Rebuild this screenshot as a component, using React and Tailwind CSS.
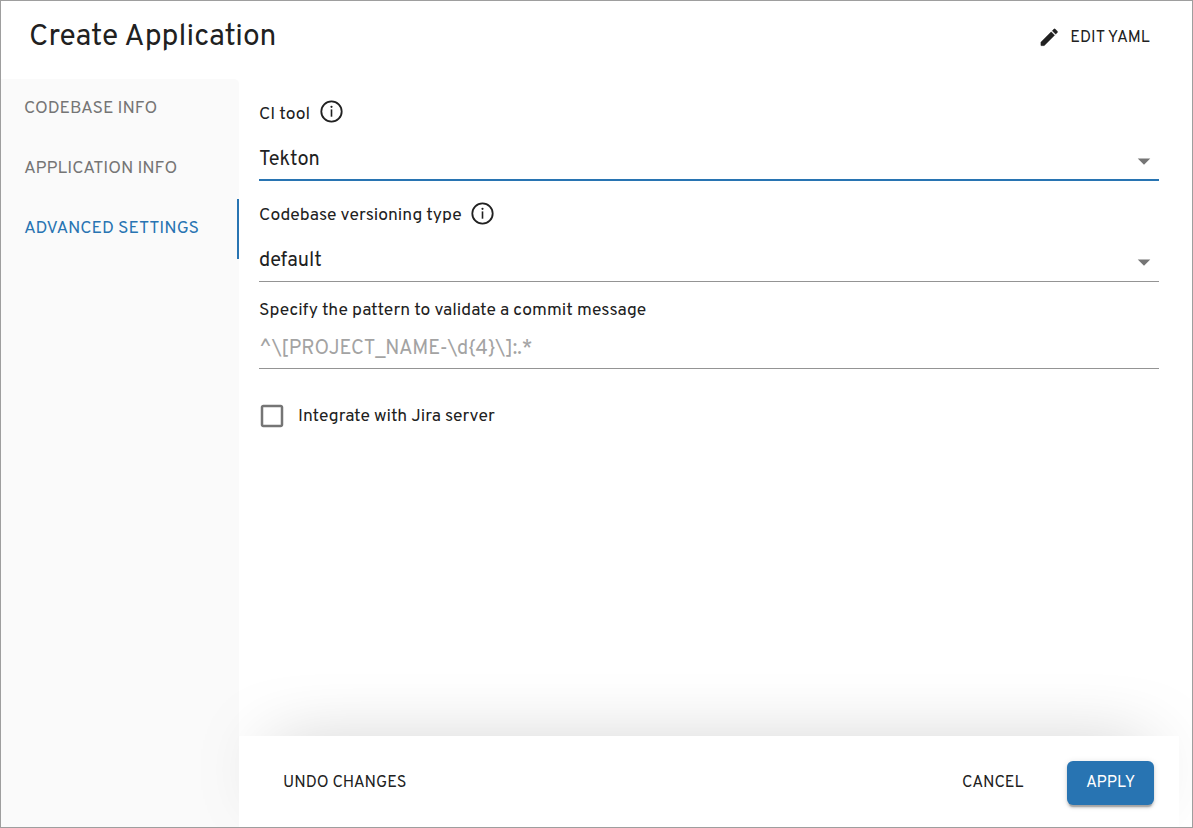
function InfoIcon() {
  return (
    <svg viewBox="0.5 0.5 24 24" className="h-[24px] w-[24px] shrink-0 fill-[#212121]">
      <circle cx="12" cy="12" r="10.2" fill="none" stroke="#212121" strokeWidth="1.8" />
      <circle cx="12" cy="7.3" r="1.1" />
      <path d="M11.200 9.900h1.600v7.300h-1.600z" />
    </svg>
  );
}

function ArrowDropDown() {
  return (
    <svg viewBox="0 0 24 24" className="h-[30px] w-[30px] shrink-0 fill-[#757575]">
      <path d="m7 10 5 5 5-5z" />
    </svg>
  );
}

function PencilIcon() {
  return (
    <svg viewBox="0 0 24 24" className="h-[22.5px] w-[22.5px] shrink-0 fill-[#212121] stroke-[#212121]" strokeWidth="0.3" strokeLinejoin="round">
      <path d="M3 17.460v3.040c0 .28.22.5.5.5h3.040c.13 0 .26-.05.35-.15L17.810 9.940l-3.750-3.750L3.150 17.100q-.15.15-.15.36M20.710 7.040c.39-.39.39-1.020 0-1.410l-2.340-2.340a.996.996 0 0 0-1.410 0l-1.830 1.830 3.750 3.750z" />
    </svg>
  );
}

export default function App() {
  return (
    <div className="flex h-[828px] w-[1193px] flex-col overflow-hidden border border-[#9e9e9e] bg-white font-[Overpass,Roboto,sans-serif] text-[17.5px] leading-6 text-[#212121]">
      <header className="flex h-[78px] shrink-0 items-start justify-between pl-[28px] pr-[42px]">
        <h1 className="pt-[18px] text-[30px] leading-[38px] tracking-[0.08px]">Create Application</h1>
        <button className="flex items-center gap-[9.5px] pt-[23px] text-[16.25px] tracking-[0.1px]">
          <PencilIcon />
          <span className="pt-[2px]">EDIT YAML</span>
        </button>
      </header>

      <div className="flex min-h-0 flex-1">
        <nav className="flex w-[238px] shrink-0 flex-col rounded-tr-[5px] bg-[#fafafa] text-[#757575]">
          <button className="h-[60px] pb-[1px] pl-[23px] text-left">CODEBASE INFO</button>
          <button className="h-[60px] pb-[1px] pl-[23px] text-left">APPLICATION INFO</button>
          <button className="h-[60px] border-r-2 border-[#2874b2] pb-[1px] pl-[23px] text-left text-[#2874b2]">ADVANCED SETTINGS</button>
        </nav>

        <main className="flex flex-1 flex-col">
          <div className="flex flex-1 flex-col pl-[20px] pr-[33px] pt-[19px]">
            <div className="flex h-[27px] items-center gap-[9.5px]">
              <span className="pt-[6px]">CI tool</span>
              <InfoIcon />
            </div>
            <div className="mt-[17px] flex h-[39px] items-start justify-between border-b-2 border-[#2874b2] text-[20px]">
              <span className="pt-[6px]">Tekton</span>
              <div className="pt-[4px]">
                <ArrowDropDown />
              </div>
            </div>
            <div className="mt-[19px] flex h-[27px] items-center gap-[9px]">
              <span className="pt-[4px]">Codebase versioning type</span>
              <InfoIcon />
            </div>
            <div className="mt-[17px] flex h-[38px] items-start justify-between border-b border-[#949494] text-[20px]">
              <span className="pt-[5px]">default</span>
              <div className="pt-[3px]">
                <ArrowDropDown />
              </div>
            </div>
            <label className="mt-[17px]">Specify the pattern to validate a commit message</label>
            <div className="mt-[14px] h-[32px] border-b border-[#949494] text-[20px] text-[#a3a3a3]">
              {"^\\[PROJECT_NAME-\\d{4}\\]:.*"}
            </div>
            <label className="mt-[32px] flex items-center gap-[11px]">
              <svg viewBox="0 0 24 24" className="-ml-[2px] h-[30px] w-[30px] shrink-0 fill-[#757575]">
                <path d="M19 5v14H5V5zm0-2H5c-1.100 0-2 .9-2 2v14c0 1.100.9 2 2 2h14c1.100 0 2-.9 2-2V5c0-1.100-.9-2-2-2" />
              </svg>
              <span className="pt-[1px]">Integrate with Jira server</span>
            </label>
          </div>

          <footer className="mr-[13px] flex h-[91px] shrink-0 items-center bg-white pl-[44px] pr-[25px] text-[16.25px] shadow-[0_-12px_75px_-32px_rgba(0,0,0,0.4)]">
            <button className="pt-[2px]">UNDO CHANGES</button>
            <button className="ml-auto pt-[2px]">CANCEL</button>
            <button className="ml-[43.500px] mt-[3px] h-[44px] w-[87px] rounded-[6px] bg-[#2874b2] text-white shadow-[0_4px_1px_-2px_rgba(0,0,0,0.2),0_2.500px_2.500px_0_rgba(0,0,0,0.14),0_1px_6px_0_rgba(0,0,0,0.12)]">APPLY</button>
          </footer>
        </main>
      </div>
    </div>
  );
}
